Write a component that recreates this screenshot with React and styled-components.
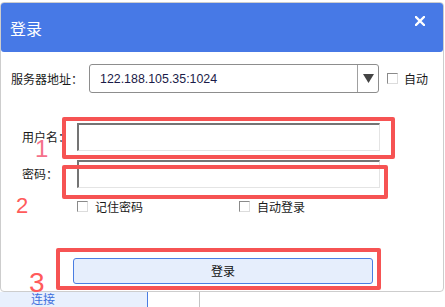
import React from "react";
import styled, { createGlobalStyle } from "styled-components";

const Global = createGlobalStyle`
  html, body { margin: 0; padding: 0; background: #ffffff; overflow: hidden; }
  body { font-family: "Noto Sans CJK SC", "Liberation Sans", sans-serif; }
  * { box-sizing: border-box; }
`;

const Page = styled.div`
  width: 445px;
  height: 307px;
  display: flex;
  flex-direction: column;
  background: #fff;
`;

const Dialog = styled.div`
  position: relative;
  margin-top: 2px;
  width: 444px;
  height: 290px;
  border: 1px solid #cdcdcd;
  border-radius: 4px;
  background: #fff;
  display: flex;
  flex-direction: column;
  flex-shrink: 0;
`;

const Header = styled.div`
  height: 49px;
  background: #4779e6;
  border-radius: 3px;
  display: flex;
  align-items: center;
  padding-left: 9px;
`;

const Title = styled.div`
  color: #fff;
  font-size: 16px;
  line-height: 16px;
`;

const Close = styled.svg`
  margin-left: auto;
  margin-right: 18px;
  align-self: flex-start;
  margin-top: 13px;
`;

const Body = styled.div`
  display: flex;
  flex-direction: column;
  padding-left: 10px;
`;

const ServerRow = styled.div`
  margin-top: 12px;
  height: 29px;
  display: flex;
  align-items: center;
`;

const Label = styled.div`
  width: ${(p) => p.$w}px;
  margin-left: ${(p) => p.$ml || 0}px;
  font-size: 12px;
  line-height: 14px;
  color: #1a1a1a;
  white-space: nowrap;
  flex-shrink: 0;
`;

const Combo = styled.div`
  width: 290px;
  height: 29px;
  border: 1px solid #8d8d8d;
  border-radius: 3px;
  display: flex;
  align-items: stretch;
`;

const ComboText = styled.div`
  flex: 1;
  padding-left: 10px;
  display: flex;
  align-items: center;
  font-family: "Liberation Sans", Arial, sans-serif;
  font-size: 12.4px;
  color: #1b1b48;
`;

const ComboArrow = styled.div`
  width: 21px;
  border-left: 1px solid #a0a0a0;
  display: flex;
  align-items: center;
  justify-content: center;
`;

const Check = styled.span`
  width: 11px;
  height: 11px;
  flex-shrink: 0;
  background: #fff;
  border-top: 1px solid #8a8a8a;
  border-left: 1px solid #8a8a8a;
  border-right: 1px solid #dcdcdc;
  border-bottom: 1px solid #dcdcdc;
`;

const CheckGroup = styled.label`
  display: flex;
  align-items: center;
  gap: ${(p) => p.$gap || 6}px;
  margin-left: ${(p) => p.$ml || 0}px;
  width: ${(p) => (p.$w ? `${p.$w}px` : "auto")};
  font-size: 12px;
  line-height: 12px;
  color: #1a1a1a;
  white-space: nowrap;
`;

const FieldRow = styled.div`
  margin-top: ${(p) => p.$mt}px;
  height: 28px;
  display: flex;
  align-items: center;
`;

const InputWrap = styled.div`
  position: relative;
  width: 303px;
  height: 28px;
`;

const Input = styled.div`
  width: 100%;
  height: 100%;
  background: #fff;
  border-top: 2px solid #747474;
  border-left: 2px solid #747474;
  border-right: 1px solid #e4e4e4;
  border-bottom: 1px solid #e4e4e4;
`;

const Mark = styled.div`
  position: absolute;
  left: ${(p) => p.$l}px;
  right: ${(p) => p.$r}px;
  top: ${(p) => p.$t}px;
  bottom: ${(p) => p.$b}px;
  border: 4px solid #f65353;
  border-radius: 2px;
  pointer-events: none;
`;

const CheckRow = styled.div`
  margin-top: 13px;
  height: 11px;
  display: flex;
  align-items: center;
  padding-left: 66px;
`;

const ButtonWrap = styled.div`
  position: relative;
  margin-top: 45px;
  margin-left: 62px;
  width: 300px;
  height: 26px;
`;

const Button = styled.button`
  width: 100%;
  height: 100%;
  background: #e6eefc;
  border: 1px solid #4a7de2;
  border-radius: 3px;
  font-family: "Noto Sans CJK SC", sans-serif;
  font-size: 12px;
  color: #111;
  padding: 0;
`;

const Num = styled.div`
  position: absolute;
  left: ${(p) => p.$l}px;
  top: ${(p) => p.$t}px;
  font-family: "Liberation Sans", Arial, sans-serif;
  font-size: ${(p) => p.$s}px;
  line-height: 1;
  color: ${(p) => p.$c};
`;

const TabBar = styled.div`
  flex: 1;
  display: flex;
`;

const Tab = styled.div`
  width: ${(p) => p.$w}px;
  background: ${(p) => p.$bg};
  border-right: 1px solid ${(p) => p.$line};
  padding-left: ${(p) => p.$pl || 0}px;
  padding-top: 1px;
  font-size: 12px;
  line-height: 12px;
  color: #3d6fdc;
`;

export default function App() {
  return (
    <>
      <Global />
      <Page>
        <Dialog>
          <Header>
            <Title>登录</Title>
            <Close width="10" height="10" viewBox="0 0 10 10">
              <path d="M1 1 L9 9 M9 1 L1 9" stroke="#fff" strokeWidth="2.3" strokeLinecap="square" />
            </Close>
          </Header>
          <Body>
            <ServerRow>
              <Label $w={78}>服务器地址：</Label>
              <Combo>
                <ComboText>122.188.105.35:1024</ComboText>
                <ComboArrow>
                  <svg width="11" height="9" viewBox="0 0 11 9">
                    <polygon points="0,0 11,0 5.5,9" fill="#444" />
                  </svg>
                </ComboArrow>
              </Combo>
              <CheckGroup $ml={8} $gap={6}>
                <Check />
                自动
              </CheckGroup>
            </ServerRow>

            <FieldRow $mt={30}>
              <Label $w={55} $ml={11}>用户名：</Label>
              <InputWrap>
                <Input />
                <Mark $l={-15} $r={-15} $t={-6} $b={-8} />
              </InputWrap>
            </FieldRow>

            <FieldRow $mt={9}>
              <Label $w={55} $ml={11}>密码：</Label>
              <InputWrap>
                <Input />
                <Mark $l={-15} $r={-8} $t={5} $b={-11} />
              </InputWrap>
            </FieldRow>

            <CheckRow>
              <CheckGroup $w={162} $gap={7}>
                <Check />
                记住密码
              </CheckGroup>
              <CheckGroup $gap={7}>
                <Check />
                自动登录
              </CheckGroup>
            </CheckRow>

            <ButtonWrap>
              <Button>登录</Button>
              <Mark $l={-17} $r={-8} $t={-9} $b={-7} />
            </ButtonWrap>
          </Body>
          <Num $l={34} $t={134} $s={24} $c="#f5708a">1</Num>
          <Num $l={15} $t={192} $s={22} $c="#ff5b5b">2</Num>
          <Num $l={28} $t={266} $s={28} $c="#ff5b5b">3</Num>
        </Dialog>
        <TabBar>
          <Tab $w={148} $bg="#e8f0fd" $line="#4a7de2" $pl={31}>连接</Tab>
          <Tab $w={52} $bg="#ffffff" $line="#c4c4c4" />
        </TabBar>
      </Page>
    </>
  );
}
